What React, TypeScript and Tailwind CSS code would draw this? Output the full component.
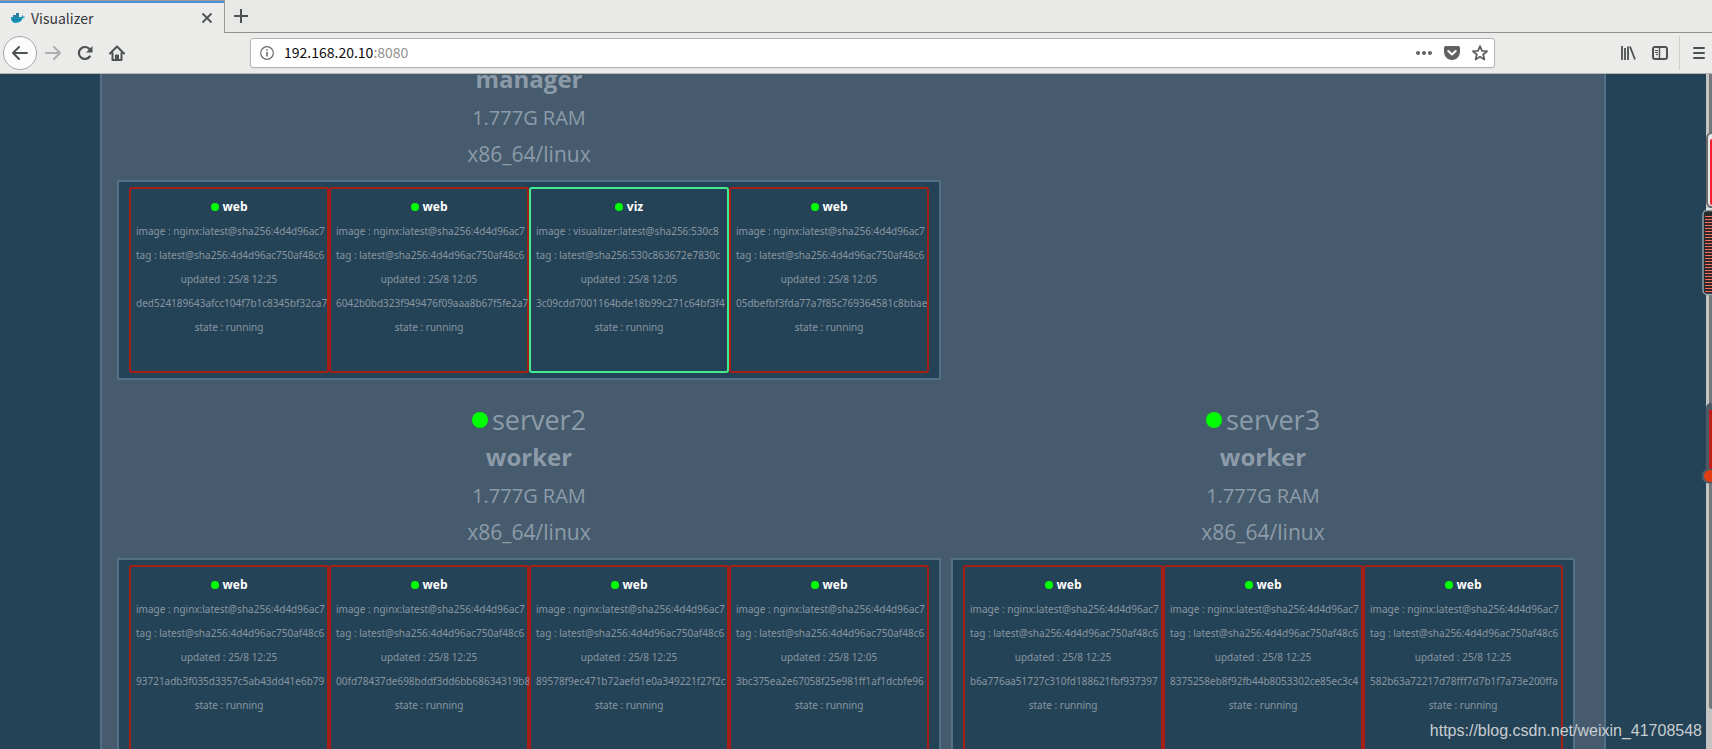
import { useState } from "react";

type Task = {
  name: string;
  image: string;
  tag: string;
  updated: string;
  id: string;
};

type ClusterNode = {
  name?: string;
  role: string;
  tasks: Task[];
};

const NGINX = "nginx:latest@sha256:4d4d96ac7";
const NGINX_TAG = "latest@sha256:4d4d96ac750af48c6";

function web(updated: string, id: string): Task {
  return { name: "web", image: NGINX, tag: NGINX_TAG, updated, id };
}

const ROWS: ClusterNode[][] = [
  [
    {
      role: "manager",
      tasks: [
        web("25/8 12:25", "ded524189643afcc104f7b1c8345bf32ca7"),
        web("25/8 12:05", "6042b0bd323f949476f09aaa8b67f5fe2a7"),
        {
          name: "viz",
          image: "visualizer:latest@sha256:530c8",
          tag: "latest@sha256:530c863672e7830c",
          updated: "25/8 12:05",
          id: "3c09cdd7001164bde18b99c271c64bf3f4",
        },
        web("25/8 12:05", "05dbefbf3fda77a7f85c769364581c8bbae"),
      ],
    },
  ],
  [
    {
      name: "server2",
      role: "worker",
      tasks: [
        web("25/8 12:25", "93721adb3f035d3357c5ab43dd41e6b79"),
        web("25/8 12:25", "00fd78437de698bddf3dd6bb68634319b8"),
        web("25/8 12:25", "89578f9ec471b72aefd1e0a349221f27f2c"),
        web("25/8 12:05", "3bc375ea2e67058f25e981ff1af1dcbfe96"),
      ],
    },
    {
      name: "server3",
      role: "worker",
      tasks: [
        web("25/8 12:25", "b6a776aa51727c310fd188621fbf937397"),
        web("25/8 12:25", "8375258eb8f92fb44b8053302ce85ec3c4"),
        web("25/8 12:25", "582b63a72217d78fff7d7b1f7a73e200ffa"),
      ],
    },
  ],
];

function TaskCard({ task }: { task: Task }) {
  return (
    <li className="w-[200px] overflow-hidden">
      <div
        className={`h-[186px] rounded-[3px] border-2 px-[5px] pt-[6px] text-center font-['Noto_Sans',sans-serif] text-[10px] leading-6 whitespace-nowrap text-[#8796a1] ${
          task.name === "viz" ? "border-[#43eb8e]" : "border-[#a61f17]"
        }`}
      >
        <h3 className="flex items-center justify-center gap-1 font-['Open_Sans',sans-serif] text-[12px] leading-6 font-bold text-white">
          <span className="size-2 rounded-full bg-[#00ff00]" />
          {task.name}
        </h3>
        <p className="text-left">image : {task.image}</p>
        <p className="text-left">tag : {task.tag}</p>
        <p>updated : {task.updated}</p>
        <p className="text-left">{task.id}</p>
        <p>state : running</p>
      </div>
    </li>
  );
}

function NodePanel({ node }: { node: ClusterNode }) {
  return (
    <section>
      <header className="pt-[21px] pb-2 text-center text-[#8d9ba8]">
        {node.name && (
          <h2 className="flex items-center justify-center gap-1 text-[27px] leading-[37px]">
            <span className="size-4 rounded-full bg-[#00ff00]" />
            {node.name}
          </h2>
        )}
        <p className="text-[24px] leading-[37px] font-bold">{node.role}</p>
        <p className="pt-[3px] text-[20px] leading-[36px]">1.777G RAM</p>
        <p className="text-[21px] leading-[36px]">x86_64/linux</p>
      </header>
      <ul className="flex border-2 border-[#537086] bg-[#254356] px-[10px] py-[5px]">
        {node.tasks.map(task => (
          <TaskCard key={task.id} task={task} />
        ))}
      </ul>
    </section>
  );
}

function WhaleIcon() {
  return (
    <svg width="16" height="12" viewBox="0 0 16 12">
      <path d="M1 5h10c1 0 1.200-.8 1-2 .9.500 1.200 1.200 1.200 1.800.8-.1 1.500 0 1.800.3-.4.8-1.200 1-2.200 1C11.800 9 9.500 11 6 11 3 11 .8 9.200 1 5z" fill="#1597c0" />
      <path d="M3 3h6v3H3zM6 1h3v2H6z" fill="#2b7f9a" />
      <path d="M2 7.500c2 .6 6 .8 9 0" stroke="#1b6f8c" fill="none" />
    </svg>
  );
}

function TabBar() {
  return (
    <div className="flex h-[33px] bg-[#e8e8e6]">
      <div className="flex w-[225px] items-center border-t border-r border-[#9a9a98] bg-[#ebebea]">
        <div className="flex h-full flex-1 items-center border-t-2 border-[#4a90d9] pr-[11px] pb-px pl-[10px]">
          <WhaleIcon />
          <span className="ml-[5px] flex-1 text-[14px] leading-5 text-[#35393c]">Visualizer</span>
          <button aria-label="Close tab">
            <svg width="12" height="12" viewBox="0 0 12 12" stroke="#4c5254" strokeWidth="1.800">
              <path d="M1.500 1.500l9 9M10.500 1.500l-9 9" />
            </svg>
          </button>
        </div>
      </div>
      <div className="flex flex-1 items-center border-b border-[#8f8f8d] pl-[9px]">
        <button aria-label="New tab">
          <svg width="14" height="14" viewBox="0 0 14 14" stroke="#4c5254" strokeWidth="2">
            <path d="M7 0v14M0 7h14" />
          </svg>
        </button>
      </div>
    </div>
  );
}

function Toolbar() {
  const [host, setHost] = useState("192.168.20.10");

  return (
    <div className="flex h-[41px] items-center border-b border-[#b4b4b1] bg-[#ebebe9] pl-[3px] text-[#4c5254]">
      <button aria-label="Back" className="flex size-[34px] items-center justify-center rounded-full border border-[#a5a5a3] bg-[#fcfcfc]">
        <svg width="16" height="16" viewBox="0 0 16 16" fill="none" stroke="currentColor" strokeWidth="2" strokeLinecap="round" strokeLinejoin="round">
          <path d="M15 8H1.500M7 2L1 8l6 6" />
        </svg>
      </button>
      <button aria-label="Forward" disabled className="ml-2 text-[#adafae]">
        <svg width="16" height="16" viewBox="0 0 16 16" fill="none" stroke="currentColor" strokeWidth="2" strokeLinecap="round" strokeLinejoin="round">
          <path d="M1 8h13.500M9 2l6 6-6 6" />
        </svg>
      </button>
      <button aria-label="Reload" className="ml-4">
        <svg width="16" height="16" viewBox="0 0 16 16" fill="none" stroke="currentColor" strokeWidth="2.200">
          <path d="M12.800 11.500A6 6 0 1 1 12.200 3.800" strokeLinecap="round" />
          <path d="M15.500 1v6.500H9z" fill="currentColor" stroke="none" />
        </svg>
      </button>
      <button aria-label="Home" className="ml-4">
        <svg width="16" height="16" viewBox="0 0 16 16" fill="none" stroke="currentColor" strokeWidth="2" strokeLinejoin="round" strokeLinecap="round">
          <path d="M1 8.500L8 1.500l7 7M3.500 8v7h9V8" />
          <path d="M6.500 15v-5h3v5z" fill="currentColor" strokeWidth="1" />
        </svg>
      </button>

      <div className="mx-[125px] flex h-[30px] flex-1 items-center rounded-[3px] border border-[#b3b3b1] bg-white pr-[6px] pl-[9px] text-[14px] leading-5 shadow-xs">
        <svg width="14" height="14" viewBox="0 0 14 14" fill="none" stroke="#6b6b6b">
          <circle cx="7" cy="7" r="6.300" strokeWidth="1.200" />
          <path d="M7 6v4.500M7 3.200v1.600" strokeWidth="1.600" />
        </svg>
        <div className="ml-[10px] flex flex-1 pb-[2px]">
          <input
            aria-label="Address"
            value={host}
            onChange={e => setHost(e.target.value)}
            className="field-sizing-content text-[#0c0c0d] outline-none"
          />
          <span className="text-[#909090]">:8080</span>
        </div>
        <div className="flex items-center gap-3 text-[#616161]">
          <button aria-label="Page actions">
            <svg width="16" height="16" viewBox="0 0 16 16" fill="currentColor">
              <circle cx="2" cy="8" r="2" />
              <circle cx="8" cy="8" r="2" />
              <circle cx="14" cy="8" r="2" />
            </svg>
          </button>
          <button aria-label="Save to Pocket">
            <svg width="16" height="16" viewBox="0 0 16 16">
              <path d="M1.800 1h12.400A1.800 1.800 0 0 1 16 2.800V7a8 8 0 0 1-16 0V2.800A1.800 1.800 0 0 1 1.800 1z" fill="currentColor" />
              <path d="M4.300 6l3.700 3.500L11.700 6" fill="none" stroke="#fff" strokeWidth="2" strokeLinecap="round" strokeLinejoin="round" />
            </svg>
          </button>
          <button aria-label="Bookmark">
            <svg width="16" height="16" viewBox="0 0 16 16" fill="none" stroke="currentColor" strokeWidth="1.800" strokeLinejoin="round">
              <path d="M8 1.200l2 4.600 5 .4-3.800 3.300 1.200 5L8 11.800l-4.400 2.700 1.200-5L1 6.200l5-.4z" />
            </svg>
          </button>
        </div>
      </div>

      <button aria-label="Library" className="mr-4">
        <svg width="16" height="16" viewBox="0 0 16 16" stroke="currentColor" strokeWidth="2">
          <path d="M2 1v14M5 3v12M8 1.500V15M10 1.500l5 13" strokeWidth="1.800" />
        </svg>
      </button>
      <button aria-label="Sidebars">
        <svg width="16" height="16" viewBox="0 0 16 16" fill="none" stroke="currentColor">
          <rect x="1" y="2" width="14" height="12" rx="2" strokeWidth="2" />
          <path d="M7.500 2v12" strokeWidth="1.400" />
          <path d="M3 5.500h3M3 7.500h3M4 9.500h2" />
        </svg>
      </button>
      <div className="mx-[11px] h-[34px] w-px bg-[#cfcfcd]" />
      <button aria-label="Menu" className="mr-[5px]">
        <svg width="16" height="16" viewBox="0 0 16 16" stroke="currentColor" strokeWidth="2" strokeLinecap="round">
          <path d="M3 3h10M3 8h10M3 13h10" />
        </svg>
      </button>
    </div>
  );
}

// Desktop gauges that peek in from the right screen edge
function EdgeGauges() {
  const ticks = Array.from({ length: 26 }, (_, i) => 84 + i * 3);

  return (
    <svg className="absolute top-[132px] right-0" width="10" height="356" viewBox="0 0 10 356">
      <rect x="5" y="1" width="20" height="74" rx="5" fill="#e8e8e8" stroke="#6c6c6c" strokeWidth="2" />
      <rect x="8" y="7" width="12" height="66" rx="2" fill="#fb2230" />
      <rect x="4" y="76" width="6" height="3" fill="#e4e4e4" />
      <rect x="1" y="78.500" width="20" height="84" rx="4" fill="#2a2a2a" stroke="#8fa0aa" strokeWidth="1.500" />
      {ticks.map(y => (
        <rect key={y} x="3" y={y} width="7" height="1" fill="#fb6a5c" />
      ))}
      <path d="M4 276q0-5 6-5v80H4z" fill="#4b5a66" />
      <rect x="7" y="278" width="3" height="66" fill="#bf1d1d" />
      <circle cx="7" cy="344" r="7.500" fill="#4b5a66" />
      <circle cx="8" cy="344" r="6" fill="#e03c10" />
    </svg>
  );
}

export default function App() {
  return (
    <div className="relative flex h-screen flex-col overflow-hidden">
      <div className="font-['Noto_Sans_CJK_SC',sans-serif]">
        <TabBar />
        <Toolbar />
      </div>

      <div className="flex min-h-0 flex-1 bg-[#254356] font-['Open_Sans',sans-serif]">
        <main className="mx-[100px] flex-1 overflow-hidden border-x-2 border-[#537086] bg-[#465c6e] px-[15px]">
          <div className="-mt-[35px]">
            {ROWS.map((nodes, i) => (
              <div key={i} className="flex gap-[10px]">
                {nodes.map(node => (
                  <NodePanel key={node.name ?? node.role} node={node} />
                ))}
              </div>
            ))}
          </div>
        </main>
        <div className="flex w-[6px] justify-end bg-[#c3c3c1]">
          <div className="h-[635px] w-[3px] rounded-bl-[3px] bg-[#71777a]" />
        </div>
      </div>

      <EdgeGauges />
      <a
        href="https://blog.csdn.net/weixin_41708548"
        className="absolute right-[10px] bottom-[6px] font-['Liberation_Sans',sans-serif] text-[16px] leading-6 text-[#c8ced2]"
      >
        https://blog.csdn.net/weixin_41708548
      </a>
    </div>
  );
}
